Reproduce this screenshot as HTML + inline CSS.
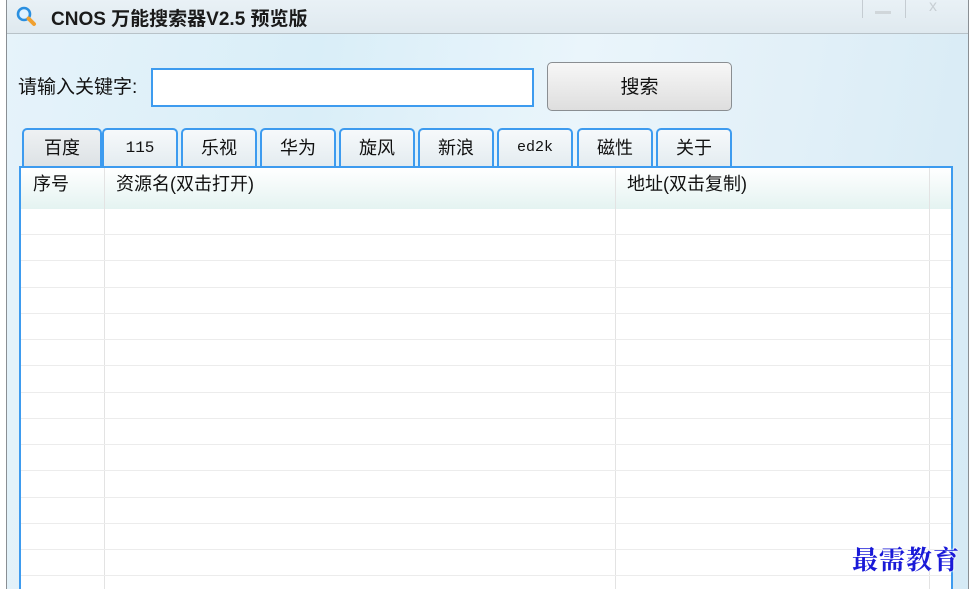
<!DOCTYPE html><html style="height:589px;overflow:hidden"><head><meta charset="utf-8"><style>
body{margin:0;width:974px;height:589px;overflow:hidden;background:#fff;position:relative;font-family:"Liberation Sans","Noto Sans CJK SC",sans-serif;}
.win{position:absolute;left:6px;top:0;width:961px;height:589px;border-left:1px solid #8a8f94;border-right:1px solid #8a8f94;background:linear-gradient(100deg,#e6f3fa 0%,#d9eef8 30%,#eaf5fb 55%,#e2f0f8 75%,#d5eaf5 100%);}
.title{position:absolute;left:0;top:0;width:961px;height:33px;background:linear-gradient(#e9f1f6,#dfe9ef);border-bottom:1px solid #b8c2c8;}
.ttext{position:absolute;left:44px;top:4px;font-size:19px;font-weight:bold;color:#1a1a1a;}
.abs{position:absolute}
.tab{position:absolute;top:128px;height:38px;width:76px;border:2px solid #3d9bef;border-bottom:none;border-radius:5px 5px 0 0;background:linear-gradient(#f6f9fb,#e4ecf0);text-align:center;font-size:18px;line-height:36px;color:#111;box-sizing:border-box}
.grid{position:absolute;left:19px;top:166px;width:934px;height:423px;border:2px solid #3d9bef;border-bottom:none;box-sizing:border-box;background:#fff;overflow:hidden}
.hdr{position:absolute;left:0;top:0;width:930px;height:41px;background:linear-gradient(#fff,#e4f3f1)}
.vl{position:absolute;top:0;width:1px;height:423px;background:#e3e3e3}
.hl{position:absolute;left:0;width:930px;height:1px;background:#ececec}
</style></head><body>
<div class="win">
<div class="title">
<svg class="abs" style="left:8px;top:5px" width="26" height="24" viewBox="0 0 26 24"><circle cx="9" cy="9" r="6" fill="#dff2ff" stroke="#2a8fe0" stroke-width="2.6"/><path d="M13.5 13.5 L19 19" stroke="#f0a030" stroke-width="4" stroke-linecap="round"/></svg>
<div class="ttext">CNOS 万能搜索器V2.5 预览版</div>
<div class="abs" style="left:855px;top:0;width:1px;height:18px;background:#c5ccd2"></div>
<div class="abs" style="left:898px;top:0;width:1px;height:18px;background:#c5ccd2"></div>
<div class="abs" style="left:868px;top:11px;width:16px;height:3px;background:#d0d6da"></div>
<div class="abs" style="left:922px;top:-2px;font-size:16px;color:#c8cfd4">x</div>
</div>
<div class="abs" style="left:11px;top:72px;font-size:19px;color:#111">请输入关键字:</div>
<div class="abs" style="left:144px;top:68px;width:383px;height:39px;border:2px solid #3d9bef;background:#fff;box-sizing:border-box"></div>
<div class="abs" style="left:540px;top:62px;width:185px;height:49px;border:1px solid #8a8e92;border-radius:5px;background:linear-gradient(#f7f7f7,#dedede);box-sizing:border-box;text-align:center;line-height:50px;font-size:19px;color:#111">搜索</div>
</div>
<div class="tab" style="left:22px;width:80px;background:linear-gradient(#eef1f3,#dde2e5)">百度</div>
<div class="tab" style="left:102px;font-family:'Liberation Mono',monospace;font-size:16px">115</div>
<div class="tab" style="left:181px">乐视</div>
<div class="tab" style="left:260px">华为</div>
<div class="tab" style="left:339px">旋风</div>
<div class="tab" style="left:418px">新浪</div>
<div class="tab" style="left:497px;font-family:'Liberation Mono',monospace;font-size:15px">ed2k</div>
<div class="tab" style="left:577px">磁性</div>
<div class="tab" style="left:656px">关于</div>
<div class="grid">
<div class="hdr"></div>
<div class="vl" style="left:83px"></div><div class="vl" style="left:594px"></div><div class="vl" style="left:908px"></div>
<div class="abs" style="left:12px;top:2px;font-size:18px;color:#111">序号</div>
<div class="abs" style="left:95px;top:2px;font-size:18px;color:#111">资源名(双击打开)</div>
<div class="abs" style="left:606px;top:2px;font-size:18px;color:#111">地址(双击复制)</div>
<div class="hl" style="top:66px"></div><div class="hl" style="top:92px"></div><div class="hl" style="top:119px"></div><div class="hl" style="top:145px"></div><div class="hl" style="top:171px"></div><div class="hl" style="top:197px"></div><div class="hl" style="top:224px"></div><div class="hl" style="top:250px"></div><div class="hl" style="top:276px"></div><div class="hl" style="top:302px"></div><div class="hl" style="top:329px"></div><div class="hl" style="top:355px"></div><div class="hl" style="top:381px"></div><div class="hl" style="top:407px"></div>
</div>
<div class="abs" style="left:852px;top:540px;font-size:26px;color:#1a1ad8;font-weight:bold;font-family:'Noto Serif CJK SC',serif;letter-spacing:1px;text-shadow:0 0 2px #fff,0 0 2px #fff">最需教育</div>
</body></html>
